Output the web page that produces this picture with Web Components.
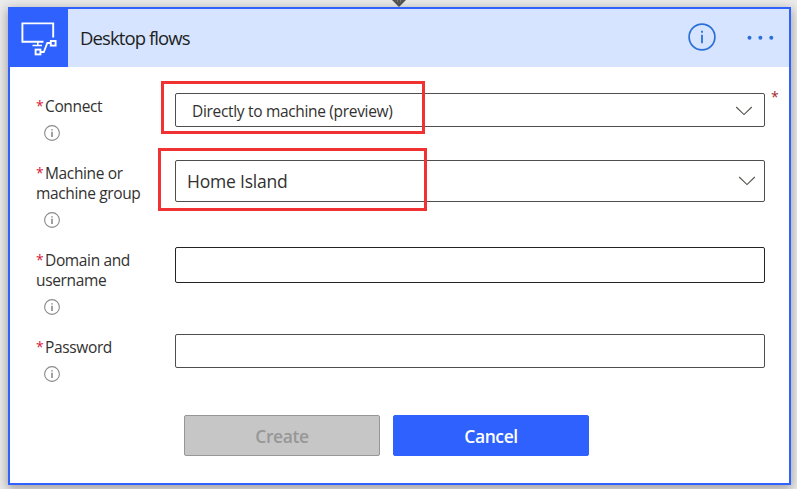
<!DOCTYPE html>
<html lang="en">
<head>
<meta charset="utf-8">
<title>Desktop flows</title>
<style>
  body {
    margin: 0;
    height: 489px;
    overflow: hidden;
    background: #ebebeb;
    font-family: 'Open Sans', 'Noto Sans', sans-serif;
    color: #323130;
  }
</style>
</head>
<body>
<flow-canvas>
  <connection-card heading="Desktop flows">
    <form-row label="Connect">
      <select-box size="small" value="Directly to machine (preview)" required></select-box>
    </form-row>
    <form-row label="Machine or" label-end="machine group">
      <select-box size="large" value="Home Island"></select-box>
    </form-row>
    <form-row label="Domain and" label-end="username">
      <text-box style="--height: 36px; --line: #252423"></text-box>
    </form-row>
    <form-row label="Password">
      <text-box></text-box>
    </form-row>
    <action-button slot="actions" disabled>Create</action-button>
    <action-button slot="actions">Cancel</action-button>
  </connection-card>
</flow-canvas>

<script>
function attach(el, html) {
  const template = document.createElement('template');
  template.innerHTML = html;
  const root = el.attachShadow({ mode: 'open' });
  root.appendChild(template.content.cloneNode(true));
  return root;
}

class FlowCanvas extends HTMLElement {
  constructor() {
    super();
    attach(this, `
      <style>
        :host {
          display: flex;
          flex-direction: column;
          width: 797px;
          height: 489px;
        }
        .connector {
          display: flex;
          justify-content: center;
          height: 7px;
        }
      </style>
      <div class="connector">
        <svg width="16" height="7" viewBox="0 0 16 7">
          <path d="M1 0H15L8 7Z" fill="#555"/>
          <path d="M6.5 0V2M9.5 0V2" stroke="#888" stroke-width="0.8"/>
        </svg>
      </div>
      <slot></slot>
    `);
  }
}

class ConnectionCard extends HTMLElement {
  constructor() {
    super();
    const root = attach(this, `
      <style>
        :host {
          display: flex;
          flex-direction: column;
          box-sizing: border-box;
          width: 783px;
          height: 478px;
          margin-left: 8px;
          border: 2px solid #2e61fe;
          background: #fff;
          box-shadow: 0 3px 10px 1px rgba(0, 0, 0, 0.32);
        }
        header {
          display: flex;
          align-items: center;
          height: 58px;
          padding-right: 14px;
          background: #d7e4ff;
        }
        .tile {
          width: 58px;
          height: 58px;
          background: #2e61fe;
        }
        h1 {
          flex: 1;
          margin: 0 0 0 12px;
          font-size: 18.5px;
          font-weight: 400;
          line-height: 24px;
          letter-spacing: -0.9px;
          color: #201f1e;
        }
        .info { margin-right: 29px; margin-top: -3px; }
        .body {
          display: flex;
          flex-direction: column;
          gap: 19px;
          padding: 26px 0 0 27px;
        }
        .actions {
          display: flex;
          gap: 13px;
          padding: 33px 0 0 174px;
        }
      </style>
      <header>
        <svg class="tile" viewBox="10 9 58 58" fill="none" stroke="#fff">
          <path d="M53.2 37.5V23.4H22.4V41.8H43.5" stroke-width="1.9"/>
          <path d="M37.8 42V45.3M32.5 45.5H42" stroke-width="1.6"/>
          <path d="M40.5 52H43.8L47.3 43H50.5" stroke-width="1.8"/>
          <rect x="50.8" y="41" width="4.8" height="4.6" stroke-width="1.9"/>
          <rect x="35.6" y="49.6" width="4.8" height="4.8" stroke-width="1.9"/>
        </svg>
        <h1></h1>
        <svg class="info" width="30" height="28" viewBox="0 0 30 28">
          <circle cx="16" cy="14" r="12.9" fill="none" stroke="#2b70d8" stroke-width="1.7"/>
          <path d="M15.1 11.8h1.8v8.4h-1.8zM15.1 7.8h1.8v2h-1.8z" fill="#2b70d8"/>
        </svg>
        <svg width="30" height="8" viewBox="0 0 30 8" fill="#2b70d8">
          <circle cx="4.5" cy="3.7" r="2"/><circle cx="15.4" cy="3.7" r="2"/><circle cx="26.3" cy="3.7" r="2"/>
        </svg>
      </header>
      <div class="body"><slot></slot></div>
      <div class="actions"><slot name="actions"></slot></div>
    `);
    root.querySelector('h1').textContent = this.getAttribute('heading');
  }
}

class FormRow extends HTMLElement {
  constructor() {
    super();
    const root = attach(this, `
      <style>
        :host {
          display: flex;
          align-items: flex-start;
        }
        .side {
          display: flex;
          flex-direction: column;
          width: 138px;
          padding-top: 3px;
        }
        label {
          display: flex;
          flex-direction: column;
          margin-left: -1px;
          font-size: 15.5px;
          line-height: 20px;
          letter-spacing: -0.36px;
        }
        .first { display: flex; }
        .star {
          width: 9px;
          font-size: 14px;
          color: #d6203a;
        }
        svg {
          margin: 9px 0 0 7px;
        }
      </style>
      <div class="side">
        <label>
          <span class="first"><span class="star">*</span><span class="text"></span></span>
        </label>
        <svg width="16" height="16" viewBox="0 0 16 16">
          <circle cx="8" cy="8" r="7.4" fill="none" stroke="#8a8a8a" stroke-width="1.1"/>
          <path d="M7.2 6.7h1.6V12H7.2zM7.2 4.2h1.6v1.4H7.2z" fill="#8a8a8a"/>
        </svg>
      </div>
      <slot></slot>
    `);
    root.querySelector('.text').textContent = this.getAttribute('label');
    if (this.hasAttribute('label-end')) {
      const line = document.createElement('span');
      line.textContent = this.getAttribute('label-end');
      root.querySelector('label').appendChild(line);
    }
  }
}

class SelectBox extends HTMLElement {
  constructor() {
    super();
    const root = attach(this, `
      <style>
        :host {
          display: flex;
          position: relative;
        }
        .box {
          display: flex;
          align-items: center;
          justify-content: space-between;
          box-sizing: border-box;
          width: 590px;
          height: 34px;
          padding: 2px 11px 0 16px;
          border: 1px solid #4f4e4d;
          border-radius: 2px;
          font-size: 15.5px;
          line-height: 20px;
          letter-spacing: -0.32px;
        }
        :host([size="large"]) .box {
          height: 42px;
          padding: 0 8px 1px 11px;
          font-size: 17.5px;
          line-height: 24px;
          letter-spacing: -0.2px;
        }
        .star {
          margin: -5px 0 0 6px;
          font-size: 14px;
          line-height: 18px;
          color: #a4262c;
        }
        /* highlight drawn over the field */
        .mark {
          position: absolute;
          box-sizing: border-box;
          left: -14px;
          top: -12px;
          width: 264px;
          height: 53px;
          border: 3px solid #f03233;
        }
        :host([size="large"]) .mark {
          left: -17px;
          width: 269px;
          height: 63px;
        }
      </style>
      <div class="box">
        <span class="value"></span>
        <svg width="18" height="10" viewBox="0 0 18 10">
          <path d="M1.2 1L9 8.6L16.8 1" fill="none" stroke="#55534f" stroke-width="1.1"/>
        </svg>
      </div>
      <div class="mark"></div>
    `);
    root.querySelector('.value').textContent = this.getAttribute('value');
    if (this.hasAttribute('required')) {
      const star = document.createElement('span');
      star.className = 'star';
      star.textContent = '*';
      root.appendChild(star);
    }
  }
}

class TextBox extends HTMLElement {
  constructor() {
    super();
    attach(this, `
      <style>
        :host { display: block; }
        input {
          display: block;
          box-sizing: border-box;
          width: 590px;
          height: var(--height, 34px);
          border: 1px solid var(--line, #4f4e4d);
          border-radius: 2px;
          background: #fff;
          font: inherit;
        }
      </style>
      <input type="text">
    `);
  }
}

class ActionButton extends HTMLElement {
  constructor() {
    super();
    attach(this, `
      <style>
        :host { display: block; }
        button {
          display: block;
          box-sizing: border-box;
          width: 196px;
          height: 41px;
          padding: 1px 0 0;
          border: 1px solid #2e61fe;
          border-radius: 2px;
          background: #2e61fe;
          color: #fff;
          font: 600 17.5px/24px 'Open Sans', 'Noto Sans', sans-serif;
          letter-spacing: -0.4px;
        }
        :host([disabled]) button {
          border-color: #979797;
          background: #c6c6c6;
          color: #979797;
        }
      </style>
      <button type="button"><slot></slot></button>
    `);
  }
}

window.customElements.define('flow-canvas', FlowCanvas);
window.customElements.define('connection-card', ConnectionCard);
window.customElements.define('form-row', FormRow);
window.customElements.define('select-box', SelectBox);
window.customElements.define('text-box', TextBox);
window.customElements.define('action-button', ActionButton);
</script>
</body>
</html>
